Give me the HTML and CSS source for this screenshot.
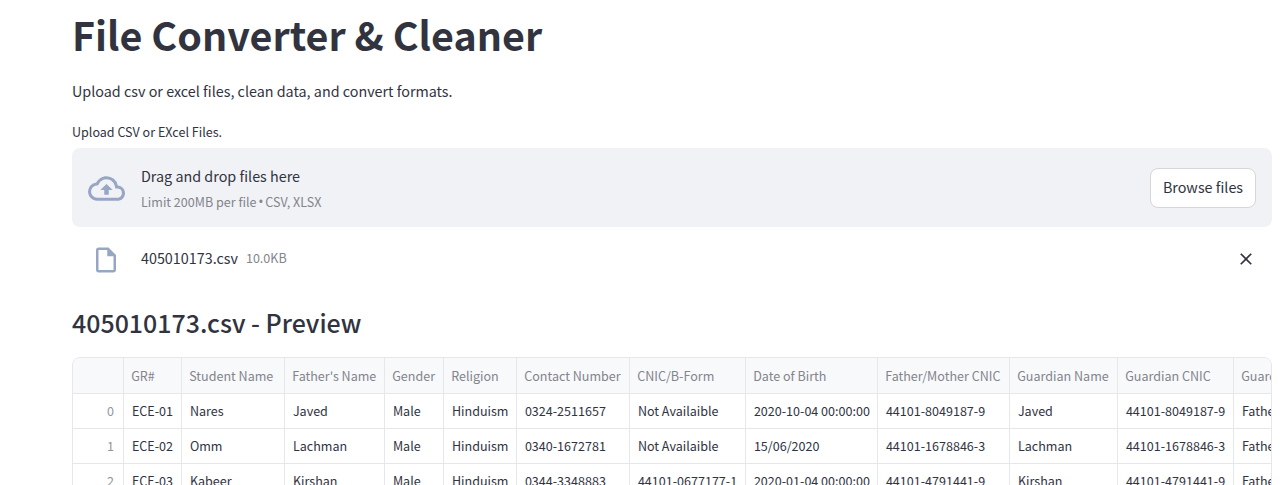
FILE: index.html
```html
<!DOCTYPE html>
<html lang="en">
<head>
<meta charset="utf-8">
<title>File Converter &amp; Cleaner</title>
<link rel="stylesheet" href="styles.css">
</head>
<body>
<main class="page">
  <h1 class="title">File Converter &amp; Cleaner</h1>
  <p class="intro">Upload csv or excel files, clean data, and convert formats.</p>
  <label class="label">Upload CSV or EXcel Files.</label>
  <section class="dropzone">
    <svg class="cloud" viewBox="0 0 24 24"><path d="M19.35 10.04A7.49 7.49 0 0012 4C9.11 4 6.6 5.64 5.35 8.04A5.994 5.994 0 000 14c0 3.31 2.69 6 6 6h13c2.76 0 5-2.24 5-5 0-2.64-2.05-4.78-4.65-4.96zM19 18H6c-2.21 0-4-1.79-4-4 0-2.05 1.53-3.76 3.56-3.97l1.07-.11.5-.95A5.469 5.469 0 0112 6c2.62 0 4.88 1.86 5.39 4.43l.3 1.5 1.53.11A2.98 2.98 0 0122 15c0 1.65-1.35 3-3 3zM8 13h2.55v3h2.9v-3H16l-4-4z"/></svg>
    <div class="hint">
      <span class="hint-main">Drag and drop files here</span>
      <span class="hint-sub">Limit 200MB per file <span class="dot">•</span> CSV, XLSX</span>
    </div>
    <button class="browse">Browse files</button>
  </section>
  <div class="file">
    <svg class="doc" viewBox="0 0 24 24" width="30" height="30"><path d="M6 2c-1.1 0-1.99.9-1.99 2L4 20c0 1.1.89 2 1.99 2H18c1.1 0 2-.9 2-2V8l-6-6H6zM6 4h7v5h5v11H6V4z"/></svg>
    <span class="file-name">405010173.csv</span>
    <span class="file-size">10.0KB</span>
    <svg class="close" viewBox="0 0 24 24" width="20" height="20"><path d="M19 6.41L17.59 5 12 10.59 6.41 5 5 6.41 10.59 12 5 17.59 6.41 19 12 13.41 17.59 19 19 17.59 13.41 12z"/></svg>
  </div>
  <h3 class="subtitle">405010173.csv - Preview</h3>
  <div class="table">
    <div class="row head"><span></span><span>GR#</span><span>Student Name</span><span>Father's Name</span><span>Gender</span><span>Religion</span><span>Contact Number</span><span>CNIC/B-Form</span><span>Date of Birth</span><span>Father/Mother CNIC</span><span>Guardian Name</span><span>Guardian CNIC</span><span>Guardian</span></div>
    <div class="row"><span class="idx">0</span><span>ECE-01</span><span>Nares</span><span>Javed</span><span>Male</span><span>Hinduism</span><span>0324-2511657</span><span>Not Availaible</span><span>2020-10-04 00:00:00</span><span>44101-8049187-9</span><span>Javed</span><span>44101-8049187-9</span><span>Father</span></div>
    <div class="row"><span class="idx">1</span><span>ECE-02</span><span>Omm</span><span>Lachman</span><span>Male</span><span>Hinduism</span><span>0340-1672781</span><span>Not Availaible</span><span>15/06/2020</span><span>44101-1678846-3</span><span>Lachman</span><span>44101-1678846-3</span><span>Father</span></div>
    <div class="row"><span class="idx">2</span><span>ECE-03</span><span>Kabeer</span><span>Kirshan</span><span>Male</span><span>Hinduism</span><span>0344-3348883</span><span>44101-0677177-1</span><span>2020-01-04 00:00:00</span><span>44101-4791441-9</span><span>Kirshan</span><span>44101-4791441-9</span><span>Father</span></div>
  </div>
</main>
</body>
</html>
```
FILE: styles.css
```css
* { box-sizing: border-box; }
html, body { height: 100%; }
body {
  margin: 0;
  overflow: hidden;
  background: #fff;
  color: #31333f;
  font-family: "Noto Sans CJK SC", "Noto Sans", sans-serif;
}
.page { padding: 7px 10px 0 72px; height: 485px; overflow: hidden; }
h1, h3, p { margin: 0; }
.title { font-size: 39.45px; line-height: 54px; font-weight: 700; }
.intro { margin-top: 18px; font-size: 14.35px; line-height: 24px; }
.label { display: block; margin-top: 18px; font-size: 12.55px; line-height: 22px; }
.dropzone {
  display: flex;
  align-items: center;
  height: 79px;
  margin-top: 5px;
  padding: 0 16px;
  border-radius: 8px;
  background: #f0f2f6;
}
.cloud, .doc { fill: #97a6c3; flex: none; }
.cloud { width: 37px; height: 37px; margin-top: 1px; }
.hint { display: flex; flex-direction: column; margin-left: 16px; padding-top: 2px; }
.hint-main { font-size: 14.35px; line-height: 26px; }
.hint-sub, .file-size { font-size: 12.55px; color: #83848c; }
.hint-sub { line-height: 24px; padding-top: 1px; }
.dot { font-family: "Open Sans", sans-serif; font-size: 14px; margin: 0 -1px; line-height: 1; }
.browse {
  width: 106px;
  height: 40px;
  margin-left: auto;
  padding: 0 0 2px;
  border: 1px solid #d6d6d9;
  border-radius: 8px;
  background: #fff;
  color: inherit;
  font: 14.35px/24px "Noto Sans CJK SC", sans-serif;
}
.file { display: flex; align-items: center; height: 40px; margin-top: 12px; padding: 0 16px 0 19.4px; }
.doc { margin-top: 1px; }
.file-name { margin-left: 19.6px; padding-bottom: 3px; font-size: 14.35px; line-height: 24px; }
.file-size { margin-left: 8px; padding-bottom: 2px; line-height: 20px; }
.close { margin-left: auto; fill: #31333f; }
.subtitle { margin-top: 25px; font-size: 24.95px; line-height: 36px; font-weight: 500; }
.table {
  height: 160px;
  margin-top: 17px;
  overflow: hidden;
  border: 1px solid #e6e7ea;
  border-radius: 8px;
}
.row {
  display: grid;
  grid-template-columns: 51px 58px 103px 100px 59px 73px 113px 116px 132px 132px 108px 116px 150px;
  height: 35px;
  font-size: 12.55px;
  line-height: 34px;
  white-space: nowrap;
}
.row > span { padding-left: 7.9px; border-right: 1px solid #e6e7ea; border-bottom: 1px solid #e6e7ea; }
.head { height: 36px; line-height: 36px; background: #f8f9fb; color: #83848c; }
.head > span { height: 36px; }
.row.head > span { padding-left: 7.2px; }
.row > .idx { padding: 0 9px 0 0; text-align: right; color: #93959f; }
```
